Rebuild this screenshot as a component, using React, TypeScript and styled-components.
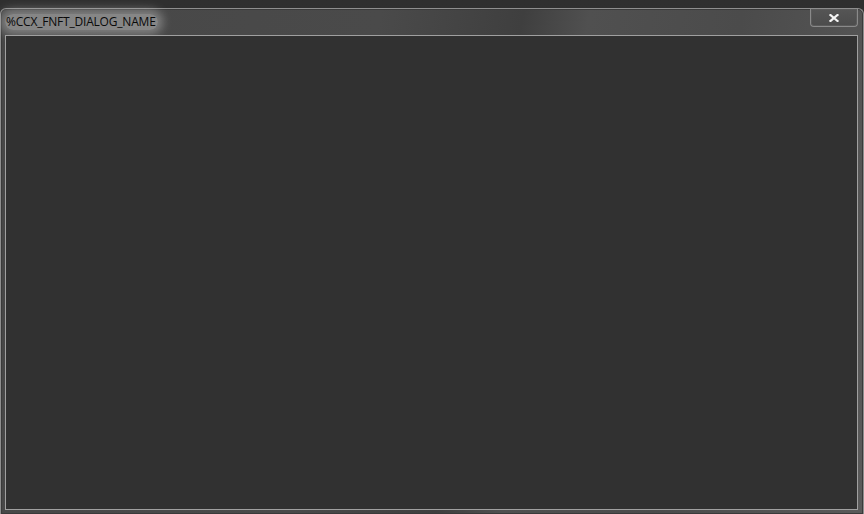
import * as React from "react";
import styled, { createGlobalStyle } from "styled-components";

const Global = createGlobalStyle`
  html, body {
    margin: 0;
    padding: 0;
    width: 864px;
    height: 514px;
    overflow: hidden;
    background: #2b2b2b;
  }
  #root {
    width: 864px;
    height: 514px;
  }
`;

const Desk = styled.div`
  width: 864px;
  height: 514px;
  padding-top: 8px;
  box-sizing: border-box;
  background: linear-gradient(#2f2f2f, #262626);
`;

const Frame = styled.div`
  width: 864px;
  height: 506px;
  box-sizing: border-box;
  border: 1px solid #8e8e8e;
  border-bottom: none;
  border-radius: 6px 6px 0 0;
  background: linear-gradient(
    100deg,
    #474747 0%,
    #4a4a4a 40%,
    #3f3f3f 55%,
    #505050 62%,
    #4b4b4b 78%,
    #5a5a5a 100%
  );
  box-shadow: inset 0 0 0 1px #3a3a3a;
  display: flex;
  flex-direction: column;
  padding: 0 5px 4px 4px;
`;

const TitleBar = styled.div`
  height: 26px;
  display: flex;
  align-items: flex-start;
  justify-content: space-between;
`;

const Title = styled.span`
  margin-top: 5px;
  padding: 0 2px 0 1px;
  font-family: "Open Sans", "DejaVu Sans", sans-serif;
  font-size: 12px;
  letter-spacing: -0.2px;
  line-height: 16px;
  color: #0a0a0a;
  border-radius: 10px;
  background: rgba(195, 195, 195, 0.5);
  box-shadow: 0 0 10px 5px rgba(195, 195, 195, 0.45);
`;

const CloseButton = styled.div`
  width: 48px;
  height: 18px;
  box-sizing: border-box;
  border: 1px solid #8a8a8a;
  border-top: none;
  border-radius: 0 0 4px 4px;
  box-shadow: inset 0 0 0 1px #5a5a5a;
  background: linear-gradient(#555, #4c4c4c);
  display: flex;
  align-items: center;
  justify-content: center;
`;

const Client = styled.div`
  flex: 1;
  box-sizing: border-box;
  border: 1px solid #a0a0a0;
  background: #313131;
`;

const CloseGlyph = () => (
  <svg width="10" height="8" viewBox="0 0 10 8">
    <path
      d="M1.5 1 L8.5 7 M8.5 1 L1.5 7"
      stroke="#f4f4f4"
      strokeWidth="2.2"
      strokeLinecap="square"
    />
  </svg>
);

export default function App() {
  return (
    <>
      <Global />
      <Desk>
        <Frame>
          <TitleBar>
            <Title>%CCX_FNFT_DIALOG_NAME</Title>
            <CloseButton>
              <CloseGlyph />
            </CloseButton>
          </TitleBar>
          <Client />
        </Frame>
      </Desk>
    </>
  );
}
